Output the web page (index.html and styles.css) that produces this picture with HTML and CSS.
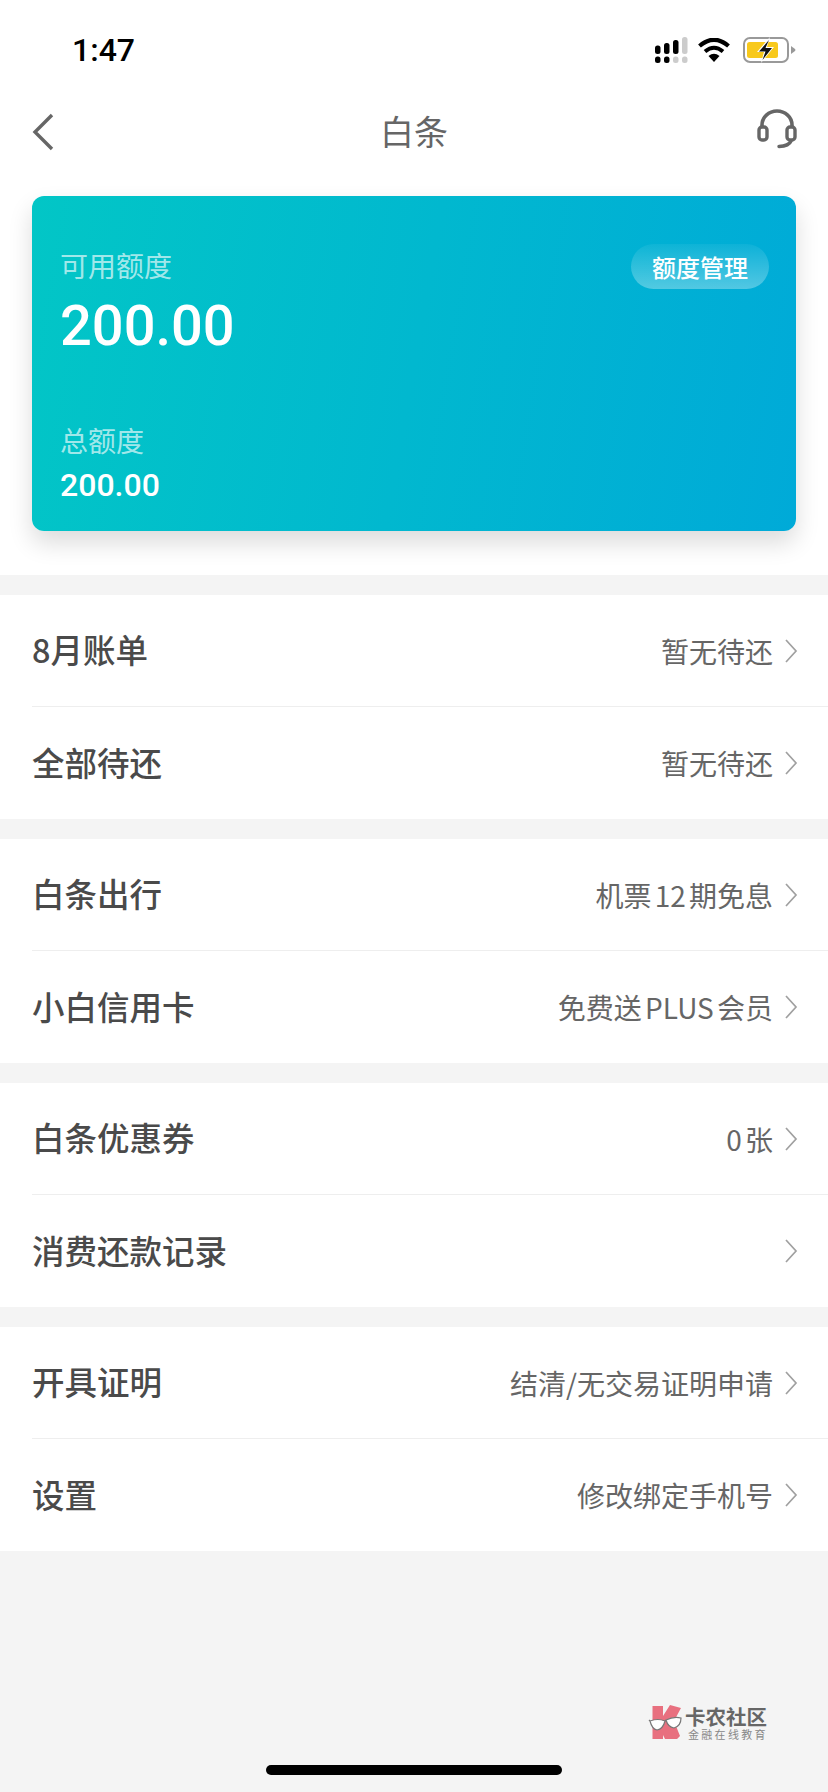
FILE: index.html
```html
<!DOCTYPE html>
<html lang="zh-CN">
<head>
<meta charset="UTF-8">
<meta name="viewport" content="width=device-width, initial-scale=1.0">
<title>白条</title>
<link rel="stylesheet" href="styles.css">
</head>
<body>
<svg class="icon-defs" width="0" height="0">
    <symbol id="chevron" viewBox="0 0 14 26">
        <path d="M2 2 L12 13 L2 24" fill="none" stroke="#a0a0a0" stroke-width="1.7"/>
    </symbol>
</svg>
<div class="top">
    <!-- Status bar -->
    <div class="status-bar">
        <span class="time">1:47</span>
        <div class="status-icons">
            <svg class="signal" width="34" height="26" viewBox="0 0 34 26">
                <rect x="0" y="8.5" width="5.5" height="8.5" rx="2.5"/>
                <rect x="9" y="6" width="5.5" height="11" rx="2.5"/>
                <rect x="18" y="3" width="5.5" height="14" rx="2.5"/>
                <rect x="27" y="0" width="5.5" height="17" rx="2.5" fill="#ccc"/>
                <rect x="0" y="19.5" width="5.5" height="6.5" rx="2.5"/>
                <rect x="9" y="19.5" width="5.5" height="6.5" rx="2.5"/>
                <rect x="18" y="19.5" width="5.5" height="6.5" rx="2.5" fill="#ccc"/>
                <rect x="27" y="19.5" width="5.5" height="6.5" rx="2.5" fill="#ccc"/>
            </svg>
            <svg class="wifi" width="32" height="24" viewBox="0 0 32 24">
                <path d="M1.5 8 Q16 -4.5 30.5 8" fill="none" stroke="#000" stroke-width="4.2"/>
                <path d="M7 13.5 Q16 6 25 13.5" fill="none" stroke="#000" stroke-width="4"/>
                <path d="M10.5 18 L16 24 L21.500 18 Q16 13.500 10.500 18 Z"/>
            </svg>
            <svg class="battery" width="53" height="26" viewBox="0 0 53 26">
                <rect x="1" y="1" width="44" height="24" rx="6" fill="none" stroke="#999" stroke-width="2"/>
                <rect x="4" y="5" width="31" height="16" rx="2.5" fill="#f8c91c"/>
                <path d="M48 9 L52 12 Q53 13 52 14 L48 17 Z" fill="#999"/>
                <path d="M27 0 L14 15 H21 L18 26 L31 10 H24 Z" fill="#fff"/>
                <path d="M26 3 L16 14.500 H22.500 L19.500 23 L29 11 H22.500 Z" fill="#111"/>
            </svg>
        </div>
    </div>
    <!-- Nav bar -->
    <div class="nav-bar">
        <svg width="22" height="38" viewBox="0 0 22 38">
            <path d="M20 2 L3 19 L20 36" fill="none" stroke="#666" stroke-width="3.4"/>
        </svg>
        <h1 class="nav-title">白条</h1>
        <svg class="nav-service" width="40" height="40" viewBox="0 0 40 40">
            <path d="M5 19 V16 A15 14 0 0 1 35 16 V19" fill="none" stroke="#666" stroke-width="3.6"/>
            <rect x="2" y="18" width="8" height="13" rx="3" fill="none" stroke="#666" stroke-width="3.4"/>
            <rect x="30" y="18" width="8" height="13" rx="3" fill="none" stroke="#666" stroke-width="3.4"/>
            <path d="M34 32 Q32 37 22 37.500" fill="none" stroke="#666" stroke-width="3.4" stroke-linecap="round"/>
        </svg>
    </div>
    <!-- Credit card -->
    <div class="card">
        <div class="card-head">
            <div>
                <div class="card-label">可用额度</div>
                <div class="card-amount">200.00</div>
            </div>
            <span class="card-btn">额度管理</span>
        </div>
        <div class="card-label">总额度</div>
        <div class="card-total">200.00</div>
    </div>
</div>

<div class="group">
    <div class="row">
        <span class="row-label">8月账单</span>
        <span class="row-value">暂无待还</span>
        <svg class="row-arrow"><use href="#chevron"/></svg>
    </div>
    <div class="row">
        <span class="row-label">全部待还</span>
        <span class="row-value">暂无待还</span>
        <svg class="row-arrow"><use href="#chevron"/></svg>
    </div>
</div>
<div class="group">
    <div class="row">
        <span class="row-label">白条出行</span>
        <span class="row-value">机票 12 期免息</span>
        <svg class="row-arrow"><use href="#chevron"/></svg>
    </div>
    <div class="row">
        <span class="row-label">小白信用卡</span>
        <span class="row-value">免费送 PLUS 会员</span>
        <svg class="row-arrow"><use href="#chevron"/></svg>
    </div>
</div>
<div class="group">
    <div class="row">
        <span class="row-label">白条优惠券</span>
        <span class="row-value">0 张</span>
        <svg class="row-arrow"><use href="#chevron"/></svg>
    </div>
    <div class="row">
        <span class="row-label">消费还款记录</span>
        <span class="row-value"></span>
        <svg class="row-arrow"><use href="#chevron"/></svg>
    </div>
</div>
<div class="group">
    <div class="row">
        <span class="row-label">开具证明</span>
        <span class="row-value">结清/无交易证明申请</span>
        <svg class="row-arrow"><use href="#chevron"/></svg>
    </div>
    <div class="row">
        <span class="row-label">设置</span>
        <span class="row-value">修改绑定手机号</span>
        <svg class="row-arrow"><use href="#chevron"/></svg>
    </div>
</div>

<!-- Watermark -->
<div class="watermark">
    <svg width="34" height="35" viewBox="0 0 34 35">
        <path d="M4.500 1 H15 V11 L22 0 L33 3 L26 16 L32 31 L29 34 H17 L15 30 V34 H4.500 Z" fill="#e8707f"/>
        <path d="M1 15 L2 16 Q10 13 17 16 Q15 24 9 25 Q4 24 2 16" fill="#fff" stroke="#777" stroke-width="1.200"/>
        <path d="M17 16 L18 15 Q26 11 33 13 Q33 21 26 23 Q20 22 18 15" fill="#fff" stroke="#777" stroke-width="1.200"/>
    </svg>
    <div>
        <div class="watermark-name">卡农社区</div>
        <div class="watermark-sub">金融在线教育</div>
    </div>
</div>

<div class="home-bar"></div>
</body>
</html>
```

FILE: styles.css
```css
/* Basic page styling */
html, body {
    margin: 0;
    height: 100%;
}
body {
    width: 828px;
    height: 1792px;
    overflow: hidden;
    display: flex;
    flex-direction: column;
    background-color: #f4f4f4;
    font-family: "Noto Sans CJK SC", Roboto, sans-serif;
}
.icon-defs {
    position: absolute;
}
.top {
    background-color: #fff;
    height: 575px;
    padding: 0 32px;
    box-sizing: border-box;
}
/* Status bar */
.status-bar {
    height: 88px;
    padding: 11px 0 0 40px;
    box-sizing: border-box;
    display: flex;
    justify-content: space-between;
    align-items: center;
}
.time {
    font-family: Roboto, sans-serif;
    font-size: 32px;
    font-weight: 500;
    color: #000;
}
.status-icons {
    display: flex;
    align-items: center;
    gap: 11px;
}
.wifi {
    margin: 0 2px 0 -2px;
}
/* Nav bar */
.nav-bar {
    height: 88px;
    display: grid;
    grid-template-columns: 1fr auto 1fr;
    align-items: center;
}
.nav-title {
    margin: 0 0 4px;
    font-size: 34px;
    font-weight: 400;
    color: #666;
}
.nav-service {
    justify-self: end;
    margin: 0 -1px 6px 0;
}
/* Card */
.card {
    height: 335px;
    margin-top: 20px;
    padding: 49px 28px 0;
    box-sizing: border-box;
    border-radius: 12px;
    color: #fff;
    background: linear-gradient(100deg, #02c6c6, #00aad8);
    box-shadow: 0 12px 24px rgba(0, 0, 0, 0.14);
}
.card-head {
    display: flex;
    justify-content: space-between;
    align-items: flex-start;
    height: 175px;
}
.card-label {
    font-size: 28px;
    line-height: 40px;
    color: rgba(255, 255, 255, 0.65);
}
.card-amount {
    font-family: Roboto, sans-serif;
    font-size: 56px;
    font-weight: 500;
    line-height: 76px;
    margin-top: 3px;
}
.card-btn {
    width: 138px;
    height: 45px;
    line-height: 45px;
    text-align: center;
    border-radius: 23px;
    font-size: 24px;
    font-weight: 500;
    margin: -1px -1px 0 0;
    background: linear-gradient(180deg, rgba(255, 255, 255, 0.05), rgba(255, 255, 255, 0.32));
}
.card-total {
    font-family: Roboto, sans-serif;
    font-size: 32px;
    font-weight: 500;
    line-height: 44px;
    margin-top: 3px;
}
/* List rows */
.group {
    margin-top: 20px;
    background-color: #fff;
    padding-left: 32px;
}
.row {
    height: 112px;
    display: flex;
    align-items: center;
    padding-right: 30px;
    box-sizing: border-box;
}
.row:first-child {
    border-bottom: 1px solid #eee;
}
.row-label {
    flex: 1;
    font-size: 32.5px;
    font-weight: 500;
    color: #4a4a4a;
    margin-bottom: 4px;
}
.row-value {
    font-size: 28px;
    color: #666;
    word-spacing: -3px;
    padding-right: 1px;
}
.row-arrow {
    width: 14px;
    height: 26px;
    margin-left: 10px;
}
/* Watermark */
.watermark {
    position: absolute;
    left: 648px;
    top: 1704px;
    display: flex;
    align-items: center;
    gap: 3px;
    color: #666;
}
.watermark-name {
    font-size: 20.5px;
    font-weight: 700;
    line-height: 24px;
}
.watermark-sub {
    font-size: 11px;
    line-height: 13px;
    letter-spacing: 2.3px;
    color: #888;
    margin-left: 3px;
}
.home-bar {
    position: absolute;
    left: 266px;
    top: 1765px;
    width: 296px;
    height: 10px;
    border-radius: 5px;
    background-color: #000;
}
```
